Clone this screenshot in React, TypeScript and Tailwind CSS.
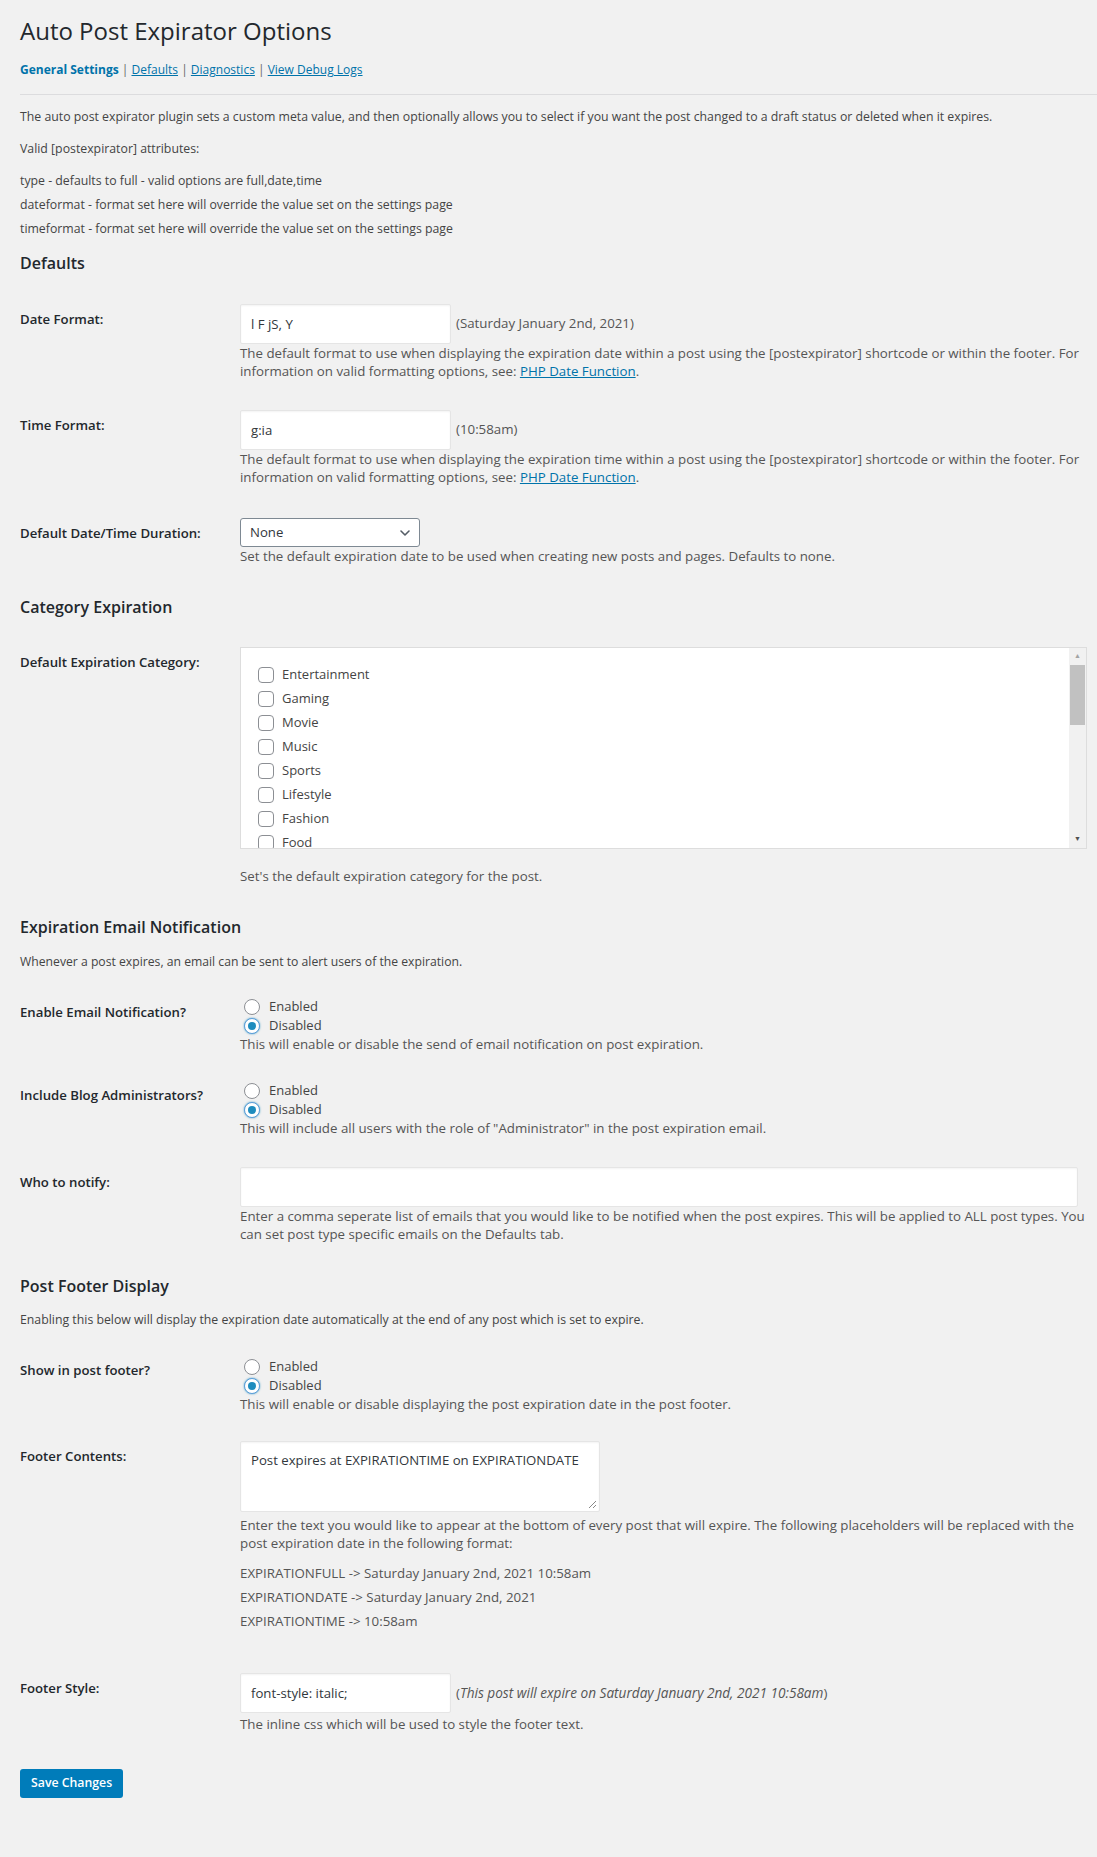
import React from 'react';

const categories = ['Entertainment', 'Gaming', 'Movie', 'Music', 'Sports', 'Lifestyle', 'Fashion', 'Food'];

const Row: React.FC<{ label: string; children: React.ReactNode; tdClass?: string }> = ({ label, children, tdClass }) => (
  <div className="grid grid-cols-[220px_1fr]">
    <div className="pt-[20px] text-[13.2px] leading-[20px] font-semibold text-[#23282d]">{label}</div>
    <div className={tdClass ?? 'py-[15px]'}>{children}</div>
  </div>
);

const Radio: React.FC<{ label: string; checked?: boolean }> = ({ label, checked }) => (
  <label className="flex items-center h-[19px] ml-[4px] gap-[9px] text-[13px] text-[#444]">
    <span
      className={
        'flex items-center justify-center w-[16px] h-[16px] rounded-full bg-white border ' +
        (checked ? 'border-[#5b9dd9] shadow-[0_0_2px_rgba(30,140,190,0.8)]' : 'border-[#8c8f94]')
      }
    >
      {checked && <span className="block w-[8px] h-[8px] rounded-full bg-[#1e8cbe]"></span>}
    </span>
    {label}
  </label>
);

const Desc: React.FC<{ children: React.ReactNode; className?: string }> = ({ children, className }) => (
  <p className={'text-[13.3px] leading-[18px] text-[#555] ' + (className ?? '')}>{children}</p>
);

const inputCls =
  'bg-white border border-[#e5e5e5] rounded-[2px] shadow-[inset_0_1px_2px_rgba(0,0,0,0.05)] text-[13.2px] text-[#32373c] outline-none';

const App: React.FC = () => {
  return (
    <div className="min-h-[1857px] bg-[#f1f1f1] font-['Open_Sans',sans-serif] text-[#444] overflow-hidden">
      <div className="pl-[20px] pr-[10px] pt-[14px]">
        {/* Header */}
        <h1 className="text-[24px] leading-[34px] text-[#23282d]">Auto Post Expirator Options</h1>
        <div className="mt-[12px] text-[12px] leading-[20px] text-[#666]">
          <span className="font-bold text-[#0073aa]">General Settings</span>
          <span> | </span>
          <a className="underline text-[#0073aa]">Defaults</a>
          <span> | </span>
          <a className="underline text-[#0073aa]">Diagnostics</a>
          <span> | </span>
          <a className="underline text-[#0073aa]">View Debug Logs</a>
        </div>
        <div className="mt-[14px] -mr-[10px] border-t border-[#dcdcde]"></div>

        <div className="text-[12.3px] leading-[16px] text-[#444]">
          <p className="mt-[14px]">
            The auto post expirator plugin sets a custom meta value, and then optionally allows you to select if you want the post changed to a draft status or deleted when it expires.
          </p>
          <p className="mt-[16px]">Valid [postexpirator] attributes:</p>
          <p className="mt-[16px]">type - defaults to full - valid options are full,date,time</p>
          <p className="mt-[8px]">dateformat - format set here will override the value set on the settings page</p>
          <p className="mt-[8px]">timeformat - format set here will override the value set on the settings page</p>
        </div>

        {/* Defaults */}
        <h2 className="mt-[15px] text-[16px] leading-[22px] font-semibold text-[#23282d]">Defaults</h2>
        <div className="mt-[15px]">
          <Row label="Date Format:">
            <div className="flex items-center">
              <input readOnly value="l F jS, Y" className={'w-[211px] h-[40px] px-[10px] ' + inputCls} />
              <span className="ml-[5px] text-[13.3px] text-[#555]">(Saturday January 2nd, 2021)</span>
            </div>
            <Desc>
              The default format to use when displaying the expiration date within a post using the [postexpirator] shortcode or within the footer. For information on valid formatting options, see:{' '}
              <a className="underline text-[#0073aa]">PHP Date Function</a>.
            </Desc>
          </Row>
          <Row label="Time Format:" tdClass="pt-[15px] pb-[17px]">
            <div className="flex items-center">
              <input readOnly value="g:ia" className={'w-[211px] h-[40px] px-[10px] ' + inputCls} />
              <span className="ml-[5px] text-[13.3px] text-[#555]">(10:58am)</span>
            </div>
            <Desc>
              The default format to use when displaying the expiration time within a post using the [postexpirator] shortcode or within the footer. For information on valid formatting options, see:{' '}
              <a className="underline text-[#0073aa]">PHP Date Function</a>.
            </Desc>
          </Row>
          <Row label="Default Date/Time Duration:">
            <div className="relative w-[180px] h-[29px] bg-white border border-[#7e8993] rounded-[3px] flex items-center pl-[9px] text-[13.2px] text-[#32373c]">
              None
              <svg className="absolute right-[8px] top-[9px]" width="12" height="10" viewBox="0 0 12 10" fill="none">
                <path d="M2 3l4 4 4-4" stroke="#555d66" strokeWidth="1.6" strokeLinecap="round" strokeLinejoin="round" />
              </svg>
            </div>
            <Desc>Set the default expiration date to be used when creating new posts and pages. Defaults to none.</Desc>
          </Row>
        </div>

        {/* Category Expiration */}
        <h2 className="mt-[16px] text-[16px] leading-[22px] font-semibold text-[#23282d]">Category Expiration</h2>
        <div className="mt-[14px]">
          <Row label="Default Expiration Category:">
            <div className="relative h-[202px] bg-white border border-[#dddddd] overflow-hidden">
              <div className="pt-[15px] pl-[17px] flex flex-col">
                {categories.map((c) => (
                  <div key={c} className="flex items-center h-[24px] gap-[8px] text-[13px] text-[#444]">
                    <span className="block w-[16px] h-[16px] rounded-[4px] border border-[#8c8f94] bg-white"></span>
                    {c}
                  </div>
                ))}
              </div>
              {/* scrollbar */}
              <div className="absolute top-0 right-0 bottom-0 w-[17px] bg-[#f1f1f1] flex flex-col items-center">
                <div className="h-[17px] flex items-center justify-center text-[#a3a3a3] text-[7px]">▲</div>
                <div className="w-[15px] h-[60px] bg-[#c1c1c1]"></div>
                <div className="flex-1"></div>
                <div className="h-[17px] flex items-center justify-center text-[#505050] text-[7px]">▼</div>
              </div>
            </div>
            <Desc className="mt-[18px]">Set's the default expiration category for the post.</Desc>
          </Row>
        </div>

        {/* Email */}
        <h2 className="mt-[16px] text-[16px] leading-[22px] font-semibold text-[#23282d]">Expiration Email Notification</h2>
        <p className="mt-[16px] text-[12.2px] leading-[16px] text-[#444]">Whenever a post expires, an email can be sent to alert users of the expiration.</p>
        <div className="mt-[12px]">
          <Row label="Enable Email Notification?" tdClass="pt-[15px] pb-[12px]">
            <Radio label="Enabled" />
            <Radio label="Disabled" checked />
            <Desc>This will enable or disable the send of email notification on post expiration.</Desc>
          </Row>
          <Row label="Include Blog Administrators?" tdClass="pt-[16px] pb-[15px]">
            <Radio label="Enabled" />
            <Radio label="Disabled" checked />
            <Desc>This will include all users with the role of "Administrator" in the post expiration email.</Desc>
          </Row>
          <Row label="Who to notify:">
            <input readOnly value="" className={'block w-[838px] h-[40px] px-[10px] ' + inputCls} />
            <Desc>
              Enter a comma seperate list of emails that you would like to be notified when the post expires. This will be applied to ALL post types. You can set post type specific emails on the Defaults tab.
            </Desc>
          </Row>
        </div>

        {/* Footer */}
        <h2 className="mt-[17px] text-[16px] leading-[22px] font-semibold text-[#23282d]">Post Footer Display</h2>
        <p className="mt-[15px] text-[12.3px] leading-[16px] text-[#444]">Enabling this below will display the expiration date automatically at the end of any post which is set to expire.</p>
        <div className="mt-[12px]">
          <Row label="Show in post footer?" tdClass="pt-[17px] pb-[13px]">
            <Radio label="Enabled" />
            <Radio label="Disabled" checked />
            <Desc>This will enable or disable displaying the post expiration date in the post footer.</Desc>
          </Row>
          <Row label="Footer Contents:">
            <div className={'relative w-[360px] h-[71px] px-[10px] py-[9px] leading-[18px] ' + inputCls}>
              Post expires at EXPIRATIONTIME on EXPIRATIONDATE
              <svg className="absolute right-[2px] bottom-[2px]" width="9" height="9" viewBox="0 0 9 9">
                <path d="M8 1L1 8M8 5L5 8" stroke="#888" strokeWidth="1" />
              </svg>
            </div>
            <Desc className="mt-[4px]">
              Enter the text you would like to appear at the bottom of every post that will expire. The following placeholders will be replaced with the post expiration date in the following format:
            </Desc>
            <Desc className="mt-[12px]">EXPIRATIONFULL -&gt; Saturday January 2nd, 2021 10:58am</Desc>
            <Desc className="mt-[6px]">EXPIRATIONDATE -&gt; Saturday January 2nd, 2021</Desc>
            <Desc className="mt-[6px] mb-[13px]">EXPIRATIONTIME -&gt; 10:58am</Desc>
          </Row>
          <Row label="Footer Style:">
            <div className="flex items-center">
              <input readOnly value="font-style: italic;" className={'w-[211px] h-[40px] px-[10px] ' + inputCls} />
              <span className="ml-[5px] text-[13.3px] text-[#555]">
                (<span className="italic text-[13.6px]">This post will expire on Saturday January 2nd, 2021 10:58am</span>)
              </span>
            </div>
            <Desc className="mt-[2px]">The inline css which will be used to style the footer text.</Desc>
          </Row>
        </div>

        <button className="mt-[21px] h-[29px] px-[11px] rounded-[3px] bg-[#007cba] text-white text-[12.3px] font-semibold">
          Save Changes
        </button>
      </div>
    </div>
  );
};

export default App;
